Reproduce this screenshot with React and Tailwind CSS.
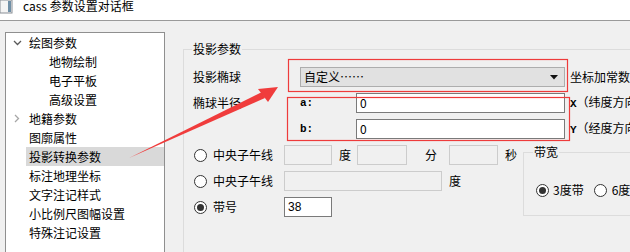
import React from "react";

const treeItems = [
  { label: "绘图参数", level: 0, chevron: "down" },
  { label: "地物绘制", level: 1 },
  { label: "电子平板", level: 1 },
  { label: "高级设置", level: 1 },
  { label: "地籍参数", level: 0, chevron: "right" },
  { label: "图廓属性", level: 0 },
  { label: "投影转换参数", level: 0, selected: true },
  { label: "标注地理坐标", level: 0 },
  { label: "文字注记样式", level: 0 },
  { label: "小比例尺图幅设置", level: 0 },
  { label: "特殊注记设置", level: 0 },
];

function Radio({ checked }) {
  return (
    <span className="flex h-[13px] w-[13px] shrink-0 items-center justify-center rounded-full border border-[#333333] bg-white">
      {checked && <span className="h-[7px] w-[7px] rounded-full bg-[#333333]" />}
    </span>
  );
}

function Chevron({ dir }) {
  if (dir === "down") {
    return (
      <svg width="9" height="6" viewBox="0 0 9 6">
        <polyline points="1,1 4.5,4.5 8,1" fill="none" stroke="#5a5a5a" strokeWidth="1.3" />
      </svg>
    );
  }
  return (
    <svg width="6" height="9" viewBox="0 0 6 9">
      <polyline points="1,1 4.5,4.5 1,8" fill="none" stroke="#a6a6a6" strokeWidth="1.3" />
    </svg>
  );
}

function Tree() {
  return (
    <div className="ml-[5px] mt-[11px] h-[240px] w-[160px] shrink-0 border border-[#8f8f8f] bg-white">
      {treeItems.map((it) => (
        <div key={it.label} className="flex h-[19px] items-center">
          <div className="flex w-[20px] shrink-0 items-center justify-center pl-[2px]">
            {it.chevron && <Chevron dir={it.chevron} />}
          </div>
          <div
            className={`flex h-[19px] flex-1 items-center pl-[3px] ${it.selected ? "bg-[#d9d9d9]" : ""}`}
          >
            <span className={it.level === 1 ? "ml-[20px]" : ""}>{it.label}</span>
          </div>
        </div>
      ))}
    </div>
  );
}

function Box({ className = "", children, white }) {
  return (
    <div
      className={`flex h-[20px] shrink-0 items-center pl-[3px] ${
        white ? "border border-[#7a7a7a] bg-white" : "border border-[#cccccc] bg-[#f0f0f0]"
      } ${className}`}
    >
      {children}
    </div>
  );
}

export default function App() {
  return (
    <div className="relative h-[252px] w-[630px] overflow-hidden bg-[#f0f0f0] font-['Microsoft_YaHei','Noto_Sans_CJK_SC',sans-serif] text-[12px] text-black">
      {/* title bar */}
      <div className="flex h-[21px] items-start border-b border-[#9a9a9a] bg-white">
        <svg width="14" height="15" viewBox="0 0 14 15" className="shrink-0">
          <rect x="0" y="0" width="12" height="13" fill="#f4f4f4" stroke="#8a8f96" />
          <rect x="8" y="1" width="3" height="11" fill="#6f8fa6" />
        </svg>
        <span className="ml-[9px] -mt-[2px] leading-[16px]">cass 参数设置对话框</span>
      </div>

      <div className="flex items-start">
        <Tree />

        {/* 投影参数 group */}
        <div className="relative ml-[18px] mt-[28px] h-[210px] flex-1 border-l border-t border-[#dcdcdc]">
          <span className="absolute -top-[10px] left-[8px] bg-[#f0f0f0] px-[1px] leading-[18px]">投影参数</span>

          <div className="flex flex-col pl-[9px] pt-[17px]">
            <div className="flex h-[20px] items-center">
              <span className="w-[107px] shrink-0">投影椭球</span>
              <div className="flex h-[20px] w-[265px] shrink-0 items-center justify-between border border-[#adadad] bg-[#e1e1e1] pl-[3px] pr-[6px]">
                <span>自定义……</span>
                <svg width="8" height="5" viewBox="0 0 8 5">
                  <polygon points="0,0 8,0 4,4.5" fill="#111" />
                </svg>
              </div>
              <span className="ml-[5px] whitespace-nowrap">坐标加常数</span>
            </div>

            <div className="mt-[6px] flex h-[20px] items-center">
              <span className="w-[107px] shrink-0">椭球半径</span>
              <span className="w-[56px] shrink-0 font-['Liberation_Mono',monospace] text-[11px] font-bold">a:</span>
              <Box white className="w-[209px]">0</Box>
              <span className="ml-[5px] whitespace-nowrap">
                <span className="font-['Liberation_Mono',monospace] text-[11px] font-bold">X</span>（纬度方向
              </span>
            </div>

            <div className="mt-[6px] flex h-[20px] items-center">
              <span className="w-[107px] shrink-0" />
              <span className="w-[56px] shrink-0 font-['Liberation_Mono',monospace] text-[11px] font-bold">b:</span>
              <Box white className="w-[209px]">0</Box>
              <span className="ml-[5px] whitespace-nowrap">
                <span className="font-['Liberation_Mono',monospace] text-[11px] font-bold">Y</span>（经度方向
              </span>
            </div>

            <div className="mt-[6px] flex items-start">
              <div className="flex w-[330px] shrink-0 flex-col">
                <div className="flex h-[20px] items-center">
                  <div className="flex w-[91px] shrink-0 items-center pl-[1px]">
                    <Radio />
                    <span className="ml-[6px]">中央子午线</span>
                  </div>
                  <Box className="w-[48px]" />
                  <span className="ml-[7px]">度</span>
                  <Box className="ml-[6px] w-[50px]" />
                  <span className="ml-[18px]">分</span>
                  <Box className="ml-[12px] w-[49px]" />
                  <span className="ml-[7px]">秒</span>
                </div>

                <div className="mt-[6px] flex h-[20px] items-center">
                  <div className="flex w-[91px] shrink-0 items-center pl-[1px]">
                    <Radio />
                    <span className="ml-[6px]">中央子午线</span>
                  </div>
                  <Box className="w-[158px]" />
                  <span className="ml-[7px]">度</span>
                </div>

                <div className="mt-[6px] flex h-[20px] items-center">
                  <div className="flex w-[91px] shrink-0 items-center pl-[1px]">
                    <Radio checked />
                    <span className="ml-[6px]">带号</span>
                  </div>
                  <Box white className="w-[48px] font-['Liberation_Sans',sans-serif]">38</Box>
                </div>
              </div>

              {/* 带宽 group */}
              <div className="relative mt-[7px] h-[64px] flex-1 border border-[#dcdcdc]">
                <span className="absolute -top-[10px] left-[9px] bg-[#f0f0f0] px-[1px] leading-[18px]">带宽</span>
                <div className="mt-[28px] flex items-center pl-[12px]">
                  <Radio checked />
                  <span className="ml-[4px] whitespace-nowrap">3度带</span>
                  <span className="ml-[10px]">
                    <Radio />
                  </span>
                  <span className="ml-[5px] whitespace-nowrap">6度带</span>
                </div>
              </div>
            </div>
          </div>
        </div>
      </div>

      {/* annotation overlay */}
      <svg
        className="pointer-events-none absolute left-0 top-0"
        width="630"
        height="252"
        viewBox="0 0 630 252"
      >
        <rect x="288.5" y="59.5" width="279" height="32" fill="none" stroke="#ee3b3b" strokeWidth="1.2" />
        <rect x="287.5" y="97.5" width="282" height="43" fill="none" stroke="#ee3b3b" strokeWidth="1.2" />
        <polygon points="129,158 262,92 265,98" fill="#f03c3c" />
        <polygon points="278,87 258,89 268,102" fill="#f03c3c" />
      </svg>
    </div>
  );
}
